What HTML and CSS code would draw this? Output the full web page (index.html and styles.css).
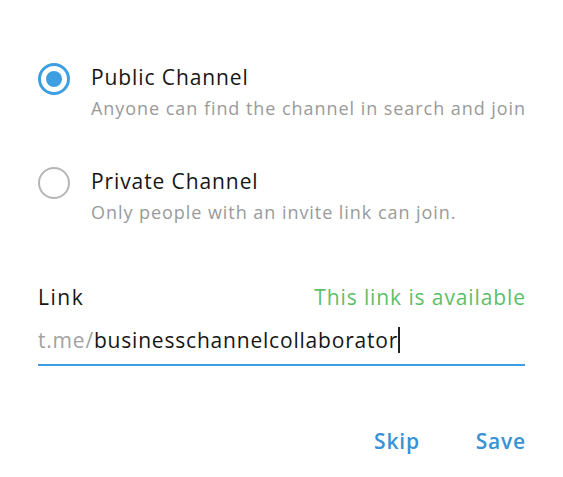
FILE: index.html
```html
<!DOCTYPE html>
<html>
<head>
<meta charset="utf-8">
<link rel="stylesheet" href="styles.css">
</head>
<body>
<div class="dialog">
  <div class="option">
    <span class="radio radio-on"><span class="dot"></span></span>
    <div class="option-text">
      <div class="option-title">Public Channel</div>
      <div class="option-desc">Anyone can find the channel in search and join</div>
    </div>
  </div>
  <div class="option option-second">
    <span class="radio"></span>
    <div class="option-text">
      <div class="option-title">Private Channel</div>
      <div class="option-desc">Only people with an invite link can join.</div>
    </div>
  </div>
  <div class="link-head">
    <span class="link-label">Link</span>
    <span class="link-status">This link is available</span>
  </div>
  <div class="field">
    <span class="prefix">t.me/</span><span class="value">businesschannelcollaborator</span><span class="caret"></span>
  </div>
  <div class="buttons">
    <span class="btn">Skip</span>
    <span class="btn">Save</span>
  </div>
</div>
</body>
</html>
```

FILE: styles.css
```css
html, body {
  margin: 0;
  padding: 0;
  background: #ffffff;
}
body {
  font-family: "Open Sans", "Liberation Sans", sans-serif;
  width: 563px;
  height: 477px;
  overflow: hidden;
}
.dialog {
  padding: 62px 38px 0 38px;
  width: 487px;
}
.option {
  display: flex;
  align-items: flex-start;
  gap: 21px;
}
.option-text {
  white-space: nowrap;
}
.option-second {
  margin-top: 44px;
}
.radio {
  box-sizing: border-box;
  width: 32px;
  height: 32px;
  border-radius: 50%;
  border: 2.5px solid #b6b6b6;
  display: flex;
  align-items: center;
  justify-content: center;
  flex: none;
  margin-top: 1px;
}
.radio-on {
  border: 3px solid #3d9fe2;
}
.dot {
  width: 16px;
  height: 16px;
  border-radius: 50%;
  background: #3d9fe2;
}
.option-title {
  font-size: 21px;
  line-height: 30px;
  letter-spacing: 0.9px;
  color: #161616;
}
.option-desc {
  font-size: 18px;
  line-height: 28px;
  letter-spacing: 0.95px;
  color: #9a9a9a;
  margin-top: 2px;
}
.link-head {
  margin-top: 56px;
  margin-right: -1px;
  display: flex;
  justify-content: space-between;
  align-items: baseline;
  white-space: nowrap;
}
.link-label {
  font-size: 21px;
  line-height: 30px;
  letter-spacing: 1.5px;
  color: #161616;
}
.link-status {
  font-size: 21px;
  line-height: 30px;
  letter-spacing: 0.9px;
  color: #5cbf68;
}
.field {
  margin-top: 10px;
  display: flex;
  align-items: center;
  border-bottom: 2px solid #3d9fe2;
  height: 36px;
  padding-bottom: 6px;
  font-size: 21px;
  letter-spacing: 0.8px;
  white-space: nowrap;
}
.prefix {
  color: #a2a2a2;
}
.value {
  color: #161616;
}
.caret {
  width: 1.5px;
  height: 26px;
  background: #222;
  margin-left: 0;
}
.buttons {
  margin-top: 61px;
  margin-right: -1px;
  display: flex;
  justify-content: flex-end;
  gap: 56px;
}
.btn {
  font-size: 21px;
  line-height: 28px;
  font-weight: 600;
  letter-spacing: 0.8px;
  color: #3a92d6;
}
```
